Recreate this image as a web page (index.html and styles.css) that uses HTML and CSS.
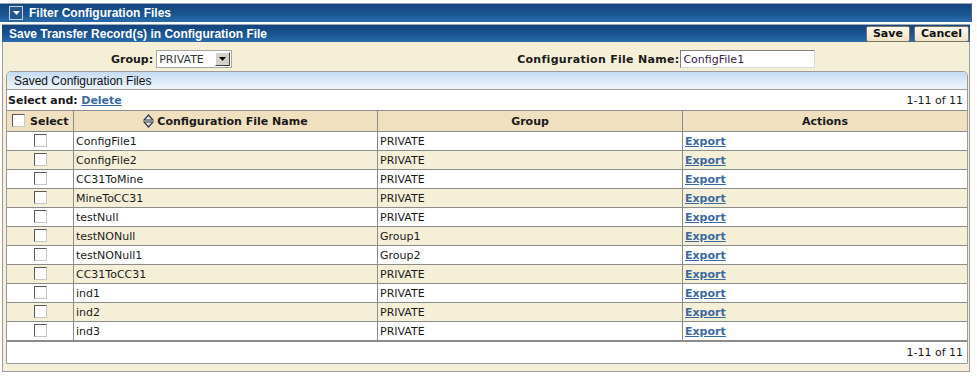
FILE: index.html
```html
<!DOCTYPE html>
<html lang="en">

<head>
    <meta charset="UTF-8">
    <title>Filter Configuration Files</title>
    <link rel="stylesheet" href="styles.css">
</head>

<body>
    <div class="filter_bar">
        <span class="toggle_btn">
            <svg width="9" height="5" viewBox="0 0 9 5"><polygon points="1,0 8,0 4.5,4" fill="#fff"/></svg>
        </span>
        Filter Configuration Files
    </div>

    <div class="panel">
        <div class="panel_title">
            <span>Save Transfer Record(s) in Configuration File</span>
            <div class="buttons">
                <button class="btn">Save</button>
                <button class="btn">Cancel</button>
            </div>
        </div>

        <div class="panel_body">
            <div class="form_row">
                <div class="field field_group">
                    <label>Group:</label>
                    <span class="fake_select">
                        <span class="value">PRIVATE</span>
                        <span class="arrow">
                            <svg width="7" height="4" viewBox="0 0 7 4"><polygon points="0,0 7,0 3.5,4" fill="#000"/></svg>
                        </span>
                    </span>
                </div>
                <div class="field field_name">
                    <label>Configuration File Name:</label>
                    <input type="text" class="text_input" value="ConfigFile1">
                </div>
            </div>

            <div class="saved_box">
                <div class="saved_head">Saved Configuration Files</div>
                <div class="toolbar">
                    <span><b>Select and:</b> <a href="#" class="link">Delete</a></span>
                    <span class="count">1-11 of 11</span>
                </div>
                <table class="files">
                    <thead>
                        <tr>
                            <th class="col_sel"><span class="check"></span>Select</th>
                            <th class="col_name">
                                <svg class="sort" width="11" height="14" viewBox="0 0 11 14">
                                    <polygon points="5.5,1 10,6 1,6" fill="none" stroke="#2c3c5c" stroke-width="1.2"/>
                                    <polygon points="1,8 10,8 5.5,13" fill="none" stroke="#2c3c5c" stroke-width="1.2"/>
                                </svg>Configuration File Name
                            </th>
                            <th class="col_group">Group</th>
                            <th class="col_act">Actions</th>
                        </tr>
                    </thead>
                    <tbody id="fileRows">
                        <!-- rows are filled in by the script below -->
                    </tbody>
                </table>
                <div class="footer_row">1-11 of 11</div>
            </div>
        </div>
    </div>

    <script>
        const files = [
            ['ConfigFile1', 'PRIVATE'],
            ['ConfigFile2', 'PRIVATE'],
            ['CC31ToMine', 'PRIVATE'],
            ['MineToCC31', 'PRIVATE'],
            ['testNull', 'PRIVATE'],
            ['testNONull', 'Group1'],
            ['testNONull1', 'Group2'],
            ['CC31ToCC31', 'PRIVATE'],
            ['ind1', 'PRIVATE'],
            ['ind2', 'PRIVATE'],
            ['ind3', 'PRIVATE'],
        ];

        const fileRows = document.getElementById('fileRows');

        files.forEach(([name, group]) => {
            const row = document.createElement('tr');
            row.innerHTML = `
                <td class="col_sel"><span class="check"></span></td>
                <td>${name}</td>
                <td>${group}</td>
                <td><a href="#" class="link">Export</a></td>`;
            fileRows.appendChild(row);
        });
    </script>
</body>

</html>
```

FILE: styles.css
```css
body {
    margin: 0;
    font-family: 'DejaVu Sans', Verdana, sans-serif;
    font-size: 11px;
    color: #1a1a1a;
    background: #fff;
}

.filter_bar {
    margin: 3px 5px 0 0;
    height: 18px;
    display: flex;
    align-items: center;
    gap: 6px;
    padding-left: 9px;
    color: #fff;
    font-family: 'Liberation Sans', Arial, sans-serif;
    font-weight: bold;
    font-size: 12px;
    background: linear-gradient(#14447d, #1a5491 55%, #2a6cab);
    border-top: 1px solid #9aa8b8;
    border-right: 1px solid #4a5f7a;
}

.toggle_btn {
    width: 12px;
    height: 12px;
    border: 1px solid #c9d4e2;
    background: #24558c;
    display: flex;
    align-items: center;
    justify-content: center;
}

.panel {
    margin: 2px 7px 0 2px;
}

.panel_title {
    height: 17px;
    display: flex;
    align-items: center;
    justify-content: space-between;
    padding-left: 7px;
    color: #fff;
    font-family: 'Liberation Sans', Arial, sans-serif;
    font-weight: bold;
    font-size: 12px;
    background: linear-gradient(#14447d, #1a5491 55%, #2a6cab);
    border-top: 1px solid #9aa8b8;
}

.buttons {
    display: flex;
    gap: 4px;
    padding-right: 1px;
}

.btn {
    font-family: 'DejaVu Sans', Verdana, sans-serif;
    font-weight: bold;
    font-size: 11px;
    color: #111;
    height: 16px;
    padding: 0 6px;
    background: linear-gradient(#fdf8ec, #efe2c8);
    border: 1px solid #7d7466;
    border-radius: 2px;
    line-height: 13px;
}

.panel_body {
    background: #f5efd8;
    border: 1px solid #9c9c9c;
    border-top: none;
    padding: 0 1px 7px 3px;
}

.form_row {
    height: 29px;
    display: flex;
    align-items: center;
    padding-top: 5px;
    box-sizing: border-box;
}

.field {
    display: flex;
    align-items: center;
    gap: 3px;
}

.field label {
    font-weight: bold;
}

.field_group {
    margin-left: 105px;
}

.field_name {
    margin-left: 285px;
    gap: 1px;
}

.field_name label {
    letter-spacing: 0.3px;
}

.fake_select {
    height: 16px;
    width: 72px;
    border: 1px solid #a6a6a6;
    background: #fff;
    display: flex;
    align-items: center;
    justify-content: space-between;
    padding-left: 2px;
    color: #333;
}

.arrow {
    width: 13px;
    height: 12px;
    margin-right: 1px;
    background: #d4d0c8;
    border: 1px solid;
    border-color: #fff #404040 #404040 #fff;
    display: flex;
    align-items: center;
    justify-content: center;
}

.text_input {
    width: 129px;
    height: 14px;
    padding: 1px 2px;
    font-family: 'DejaVu Sans', Verdana, sans-serif;
    font-size: 11px;
    color: #3a1a4a;
    border: 1px solid;
    border-color: #808080 #d8d8d8 #d8d8d8 #808080;
}

.saved_box {
    border: 1px solid #9c9c9c;
    border-radius: 5px 5px 0 0;
    background: #fff;
    overflow: hidden;
}

.saved_head {
    height: 16px;
    line-height: 16px;
    padding: 1px 0 0 7px;
    font-family: 'Liberation Sans', Arial, sans-serif;
    font-size: 12px;
    color: #111;
    background: linear-gradient(#c6dcf2, #eef5fc);
    border-bottom: 1px solid #9c9c9c;
}

.toolbar {
    height: 20px;
    display: flex;
    align-items: center;
    justify-content: space-between;
    padding: 0 4px 0 1px;
}

.link {
    color: #3b6aa0;
    font-weight: bold;
    text-decoration: underline;
}

.files {
    width: 100%;
    border-collapse: collapse;
    border-top: 1px solid #8c8c8c;
    border-bottom: 2px solid #8c8c8c;
}

.files th,
.files td {
    border: 1px solid #8c8c8c;
    height: 18px;
    padding: 0 2px;
    text-align: left;
}

.files tr > :first-child {
    border-left: none;
}

.files tr > :last-child {
    border-right: none;
}

.files th {
    height: 20px;
    background: #f0e0c0;
    text-align: center;
    font-weight: bold;
}

.files tbody tr:nth-child(even) td {
    background: #f5efd8;
}

.files .col_sel {
    width: 59px;
    text-align: center;
}

.files th.col_sel {
    text-align: left;
    padding-left: 5px;
}

.col_name {
    width: 299px;
}

.col_group {
    width: 300px;
}

.check {
    display: inline-block;
    width: 11px;
    height: 11px;
    border: 1px solid #5a5a5a;
    border-right-color: #c8c8c8;
    border-bottom-color: #c8c8c8;
    background: #fff;
    vertical-align: -2px;
}

th .check {
    margin-right: 5px;
}

.sort {
    vertical-align: -3px;
    margin-right: 3px;
}

.footer_row {
    height: 21px;
    line-height: 21px;
    text-align: right;
    padding-right: 4px;
}
```
